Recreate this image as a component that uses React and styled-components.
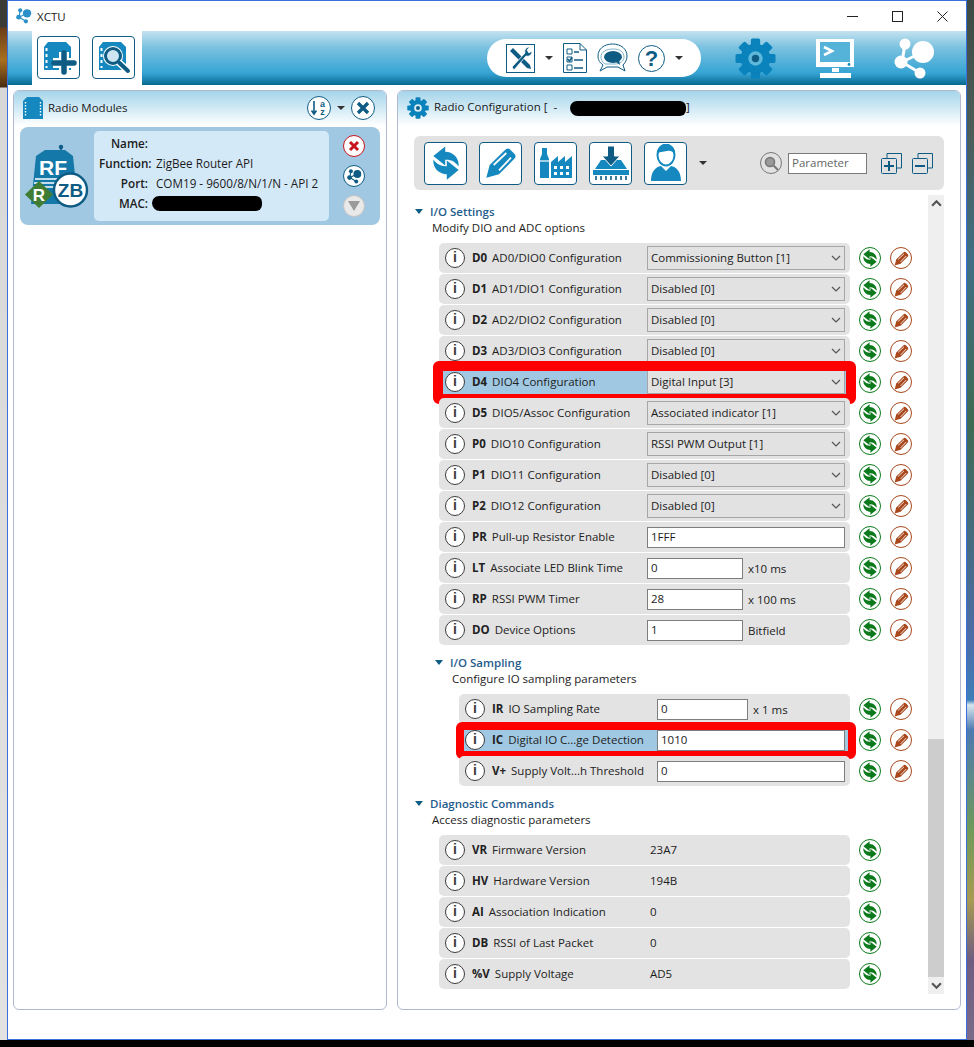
import React from "react"
import styled, { createGlobalStyle } from "styled-components"

const BLUE = "#0e5c84"
const MID = "#1589bf"
const FONT = `"Open Sans", "Noto Sans", sans-serif`

const ioRows = [
  { cmd: "D0", name: "AD0/DIO0 Configuration", select: "Commissioning Button [1]" },
  { cmd: "D1", name: "AD1/DIO1 Configuration", select: "Disabled [0]" },
  { cmd: "D2", name: "AD2/DIO2 Configuration", select: "Disabled [0]" },
  { cmd: "D3", name: "AD3/DIO3 Configuration", select: "Disabled [0]" },
  { cmd: "D4", name: "DIO4 Configuration", select: "Digital Input [3]", mark: "wide" },
  { cmd: "D5", name: "DIO5/Assoc Configuration", select: "Associated indicator [1]" },
  { cmd: "P0", name: "DIO10 Configuration", select: "RSSI PWM Output [1]" },
  { cmd: "P1", name: "DIO11 Configuration", select: "Disabled [0]" },
  { cmd: "P2", name: "DIO12 Configuration", select: "Disabled [0]" },
  { cmd: "PR", name: "Pull-up Resistor Enable", input: "1FFF" },
  { cmd: "LT", name: "Associate LED Blink Time", input: "0", unit: "x10 ms" },
  { cmd: "RP", name: "RSSI PWM Timer", input: "28", unit: "x 100 ms" },
  { cmd: "DO", name: "Device Options", input: "1", unit: "Bitfield" },
]

const samplingRows = [
  { cmd: "IR", name: "IO Sampling Rate", input: "0", unit: "x 1 ms" },
  { cmd: "IC", name: "Digital IO C...ge Detection", input: "1010", mark: "thin" },
  { cmd: "V+", name: "Supply Volt...h Threshold", input: "0" },
]

const diagRows = [
  { cmd: "VR", name: "Firmware Version", value: "23A7" },
  { cmd: "HV", name: "Hardware Version", value: "194B" },
  { cmd: "AI", name: "Association Indication", value: "0" },
  { cmd: "DB", name: "RSSI of Last Packet", value: "0" },
  { cmd: "%V", name: "Supply Voltage", value: "AD5" },
]

function SyncIcon({ color = MID, size = 22 }) {
  const arrow = "M11.5 1.5 L4 7.6 L11.5 13.6 V10 C15 9.8 17.6 11 20 14.2 C20.4 8.6 16.4 5 11.5 4.9 Z"
  return (
    <svg width={size} height={size} viewBox="0 0 24 24">
      <path d={arrow} fill={color} />
      <path d={arrow} fill={color} transform="rotate(180 12 12)" />
    </svg>
  )
}

function PencilIcon({ color = MID, size = 14 }) {
  return (
    <svg width={size} height={size} viewBox="0 0 24 24">
      <path d="M1 23 L3.5 13.5 L15 2.2 A2.8 2.8 0 0 1 19 2 L22 5 A2.8 2.8 0 0 1 21.8 9 L10.5 20.5 Z" fill={color} />
      <path d="M6.5 13.5 L16 4.5 M10.5 17.5 L19.5 8" stroke="#fff" strokeWidth="1.3" />
    </svg>
  )
}

function GearIcon({ size = 40, color = "#0a82bb", hole = "#5db8dc", dot = BLUE }) {
  const teeth = [0, 45, 90, 135, 180, 225, 270, 315]
  return (
    <svg width={size} height={size} viewBox="0 0 40 40">
      {teeth.map((a) => (
        <rect key={a} x="15.5" y="0.5" width="9" height="9" rx="1.5" fill={color} transform={`rotate(${a} 20 20)`} />
      ))}
      <circle cx="20" cy="20" r="14.5" fill={color} />
      <circle cx="20" cy="20" r="7" fill={hole} />
      <circle cx="20" cy="20" r="3.6" fill={dot} />
    </svg>
  )
}

function ModuleIcon({ add, search }) {
  return (
    <svg width="37" height="37" viewBox="0 0 37 37">
      <path d="M8 3 L26 3 L31 8 V31 H4 V8 Z" fill={MID} />
      <path d="M6.5 9V12M6.5 15V18M6.5 21V24M6.5 27V29" stroke="#fff" strokeWidth="2" />
      {add && (
        <>
          <path d="M24 13 V34 M13 24 H35" stroke="#fff" strokeWidth="10" />
          <path d="M24 14 V33 M14 24 H34" stroke={BLUE} strokeWidth="5.5" strokeLinecap="round" />
        </>
      )}
      {search && (
        <>
          <circle cx="18" cy="17" r="10" fill="#fff" />
          <circle cx="18" cy="17" r="7.5" fill="#cfe6f2" stroke={BLUE} strokeWidth="3" />
          <path d="M23.5 23 L33 32" stroke="#fff" strokeWidth="7" />
          <path d="M24 23.5 L33 32" stroke={BLUE} strokeWidth="4" strokeLinecap="round" />
        </>
      )}
    </svg>
  )
}

function FactoryIcon() {
  return (
    <svg width="36" height="36" viewBox="0 0 36 36">
      <path d="M2 33 V14 L4 9 V3 H9 V9 L11 14 V33 Z" fill={MID} />
      <path d="M13 33 V17 L20 11 V17 L27 11 V17 L34 11 V33 Z" fill={MID} />
      <path d="M16 21h3v3h-3zM22 21h3v3h-3zM28 21h3v3h-3zM16 27h3v3h-3zM22 27h3v3h-3zM28 27h3v3h-3z" fill="#fff" />
      <path d="M2 16 H11" stroke="#fff" strokeWidth="1.2" />
    </svg>
  )
}

function LoadIcon() {
  return (
    <svg width="38" height="36" viewBox="0 0 38 36">
      <path d="M3 24 L9 15 H29 L35 24 Z" fill={MID} />
      <path d="M1 25 H37 V30 H1 Z" fill={MID} />
      <path d="M4 31V35M9 31V35M14 31V35M19 31V35M24 31V35M29 31V35M34 31V35" stroke={BLUE} strokeWidth="1.6" />
      <path d="M15.5 1 H22.5 V11 H28 L19 21 L10 11 H15.5 Z" fill={BLUE} stroke="#fff" strokeWidth="1" />
    </svg>
  )
}

function ProfileIcon() {
  return (
    <svg width="32" height="38" viewBox="0 0 32 38">
      <path d="M1 37 C1 27 6 23 11 22 L16 27 L21 22 C26 23 31 27 31 37 Z" fill={MID} />
      <ellipse cx="16" cy="11" rx="8.5" ry="10.5" fill="#fff" stroke={MID} strokeWidth="2" />
      <path d="M7 11 C7 2 11 1 16 1 C22 1 25 3 25 11 C23 7 20 6 17 7 C13 8 9 7 7 11 Z" fill={MID} />
    </svg>
  )
}

function ToolsIcon() {
  return (
    <svg width="29" height="29" viewBox="0 0 29 29">
      <rect x="0.5" y="0.5" width="28" height="28" fill="#fff" stroke={BLUE} />
      <path d="M4 7 L7 4 L24 21 L25 25 L21 24 Z" fill={BLUE} />
      <path d="M6 23 L19 9 C18 6 20 3 24 3 L21 6 L23 9 L26 7 C26 11 23 13 20 12 L8 26 Z" fill={BLUE} stroke="#fff" strokeWidth="0.8" />
    </svg>
  )
}

function ChecklistIcon() {
  return (
    <svg width="24" height="30" viewBox="0 0 24 30">
      <path d="M0.5 0.5 H17 L23.5 7 V29.5 H0.5 Z M17 0.5 V7 H23.5" fill="#fff" stroke={BLUE} />
      <path d="M4 6h5v5H4zM4 14h5v5H4zM4 22h5v5H4z" fill="none" stroke={BLUE} />
      <path d="M11 9h5M11 17h9M11 25h9" stroke={BLUE} strokeWidth="1.6" />
      <path d="M4.5 16 L6.5 18 L9 14.5" stroke={BLUE} strokeWidth="1.6" fill="none" />
    </svg>
  )
}

function ChatIcon() {
  return (
    <svg width="31" height="30" viewBox="0 0 31 30">
      <path d="M6 22 C2 19 1 16 1 13 C1 6 7 1 15.5 1 C24 1 30 6 30 13 C30 16 29 19 26 22 L28 28 L21 24 H10 L3 28 Z" fill="#fff" stroke={BLUE} />
      <path d="M8 21 C5 19 4 16 4 14 C4 9 9 6 16 6 C23 6 27 9 27 14 C27 18 23 21 18 21 L13 21 Z" fill="none" stroke="#7db2cb" />
      <ellipse cx="16" cy="14" rx="9" ry="6" fill={BLUE} />
      <path d="M18 18 L23 22 L22 17 Z" fill={BLUE} />
    </svg>
  )
}

function MonitorIcon() {
  return (
    <svg width="40" height="40" viewBox="0 0 40 40">
      <path d="M1 1 H39 V29 H1 Z" fill="#fff" />
      <path d="M5 4 H35 V24 H5 Z" fill="#55b2d9" />
      <path d="M9 9 L17 13 L9 17" fill="none" stroke="#fff" strokeWidth="2.6" />
      <path d="M17 30 H24 V34 H17 Z M5 35 H36 V40 H5 Z" fill="#fff" />
      <circle cx="34" cy="26.5" r="1.4" fill={MID} />
    </svg>
  )
}

function NetworkIcon({ size = 42, color = "#fff" }) {
  return (
    <svg width={size} height={size} viewBox="0 0 42 42">
      <path d="M8 24 L11 6 M8 24 L29 14 M8 24 L26 35" stroke={color} strokeWidth="3" />
      <circle cx="11" cy="6" r="5.5" fill={color} />
      <circle cx="29" cy="14" r="11" fill={color} />
      <circle cx="7" cy="24" r="6.5" fill={color} />
      <circle cx="26" cy="35" r="5.5" fill={color} />
    </svg>
  )
}

function RadioBadge() {
  return (
    <svg width="66" height="66" viewBox="0 0 66 66">
      <path d="M38 3 V10" stroke={BLUE} strokeWidth="1.6" />
      <circle cx="38" cy="3" r="2.2" fill={BLUE} />
      <path d="M13 12 L22 6 H42 L50 12 L55 60 H8 Z" fill="#1478a8" />
      <text x="30" y="31" textAnchor="middle" fontFamily="Liberation Sans" fontWeight="700" fontSize="21" fill="#fff">RF</text>
      <path d="M12 35H52M11 39H53M10 43H54" stroke="#fff" strokeWidth="1.4" />
      <path d="M16 37 L30 50.5 L16 64 L2 50.5 Z" fill="#3f7d34" />
      <text x="16" y="57" textAnchor="middle" fontFamily="Liberation Sans" fontWeight="700" fontSize="17" fill="#fff">R</text>
      <circle cx="47.5" cy="46" r="16.5" fill="#fff" stroke={BLUE} strokeWidth="2.4" />
      <text x="47.5" y="53" textAnchor="middle" fontFamily="Liberation Sans" fontWeight="700" fontSize="19" fill={BLUE}>ZB</text>
    </svg>
  )
}

function Chevron({ up, size = 10, color = "#555", wide = 1.2 }) {
  return (
    <svg width={size} height={size} viewBox="0 0 10 10">
      <path d={up ? "M1 7 L5 3 L9 7" : "M1 3 L5 7 L9 3"} fill="none" stroke={color} strokeWidth={wide} />
    </svg>
  )
}

function ParamRow({ row, inset }) {
  return (
    <Line $inset={inset}>
      <Row $mark={row.mark} $nested={inset === 45}>
        <InfoDot>i</InfoDot>
        <RowLabel>
          <b>{row.cmd}</b>
          {row.name}
        </RowLabel>
        {row.select && (
          <SelectBox>
            {row.select}
            <Chevron />
          </SelectBox>
        )}
        {row.input && (
          <InputWrap>
            <TextBox $short={!!row.unit} $narrow={inset === 45}>{row.input}</TextBox>
            {row.unit && <Unit>{row.unit}</Unit>}
          </InputWrap>
        )}
        {row.value && <ValueText>{row.value}</ValueText>}
      </Row>
      <RoundAction $color="#0c7a1c">
        <SyncIcon color="#0c7a1c" size={20} />
      </RoundAction>
      {!row.value && (
        <RoundAction $color="#a8481c">
          <PencilIcon color="#a8481c" size={15} />
        </RoundAction>
      )}
    </Line>
  )
}

export default function App() {
  return (
    <>
      <GlobalStyle />
      <Desktop>
        <Top>
          <LeftStrip />
          <AppWindow>
            <TitleBar>
              <TitleLogo>
                <NetworkIcon size={16} color="#2b8fc8" />
              </TitleLogo>
              <TitleText>XCTU</TitleText>
              <WinControls>
                <svg width="11" height="11" viewBox="0 0 11 11"><path d="M0 5.5H11" stroke="#222" /></svg>
                <svg width="11" height="11" viewBox="0 0 11 11"><rect x="0.5" y="0.5" width="10" height="10" fill="none" stroke="#222" /></svg>
                <svg width="11" height="11" viewBox="0 0 11 11"><path d="M0.5 0.5L10.5 10.5M10.5 0.5L0.5 10.5" stroke="#222" /></svg>
              </WinControls>
            </TitleBar>

            <MainBar>
              <WhiteTab>
                <SquareBtn><ModuleIcon add /></SquareBtn>
                <SquareBtn><ModuleIcon search /></SquareBtn>
              </WhiteTab>
              <ToolPill>
                <ToolsIcon />
                <Caret />
                <ChecklistIcon />
                <ChatIcon />
                <HelpCircle>?</HelpCircle>
                <Caret />
              </ToolPill>
              <ModeIcons>
                <GearIcon size={41} />
                <MonitorIcon />
                <NetworkIcon />
              </ModeIcons>
            </MainBar>

            <Body>
              <ModulesPanel>
                <PanelHead>
                  <svg width="20" height="22" viewBox="0 0 20 22">
                    <path d="M4 0H16L20 4V22H0V4Z" fill={MID} />
                    <path d="M2.5 5v14M17.5 5v14" stroke="#fff" strokeWidth="1.4" strokeDasharray="1.5 1.5" />
                  </svg>
                  <PanelTitle>Radio Modules</PanelTitle>
                  <HeadTools>
                    <SortCircle>
                      <svg width="18" height="18" viewBox="0 0 18 18">
                        <path d="M4 2V14M1.5 11.5L4 15L6.5 11.5" fill="none" stroke={BLUE} strokeWidth="1.6" />
                        <text x="12.5" y="8" textAnchor="middle" fontFamily="Liberation Sans" fontWeight="700" fontSize="9" fill={BLUE}>a</text>
                        <text x="12.5" y="16" textAnchor="middle" fontFamily="Liberation Sans" fontWeight="700" fontSize="9" fill={BLUE}>z</text>
                      </svg>
                    </SortCircle>
                    <Caret />
                    <SortCircle>
                      <svg width="14" height="14" viewBox="0 0 14 14">
                        <path d="M2 2L12 12M12 2L2 12" stroke={BLUE} strokeWidth="3.4" />
                      </svg>
                    </SortCircle>
                  </HeadTools>
                </PanelHead>

                <DeviceCard>
                  <BadgeSlot><RadioBadge /></BadgeSlot>
                  <DeviceInfo>
                    <InfoKey>Name:</InfoKey>
                    <span />
                    <InfoKey>Function:</InfoKey>
                    <span>ZigBee Router API</span>
                    <InfoKey>Port:</InfoKey>
                    <span>COM19 - 9600/8/N/1/N - API 2</span>
                    <InfoKey>MAC:</InfoKey>
                    <Scribble $w={110} $shift={-4} />
                  </DeviceInfo>
                  <DeviceActions>
                    <CardAction $border="#c8141c">
                      <svg width="12" height="12" viewBox="0 0 12 12"><path d="M2 2L10 10M10 2L2 10" stroke="#c8141c" strokeWidth="3" /></svg>
                    </CardAction>
                    <CardAction $border={BLUE}>
                      <NetworkIcon size={15} color={BLUE} />
                    </CardAction>
                    <CardAction $border="#c4c4c4" $bg="#e9e9e9">
                      <svg width="12" height="10" viewBox="0 0 12 10"><path d="M0 0H12L6 10Z" fill="#9a9a9a" /></svg>
                    </CardAction>
                  </DeviceActions>
                </DeviceCard>
              </ModulesPanel>

              <ConfigPanel>
                <PanelHead>
                  <GearIcon size={22} hole="#d8eef7" />
                  <PanelTitle>
                    Radio Configuration [ &nbsp;- <Scribble $w={116} $shift={10} />]
                  </PanelTitle>
                </PanelHead>

                <ConfigBar>
                  <SquareBtn><SyncIcon size={38} /></SquareBtn>
                  <SquareBtn><PencilIcon size={32} /></SquareBtn>
                  <SquareBtn><FactoryIcon /></SquareBtn>
                  <SquareBtn><LoadIcon /></SquareBtn>
                  <SquareBtn><ProfileIcon /></SquareBtn>
                  <Caret />
                  <SearchGroup>
                    <SearchCircle>
                      <svg width="15" height="15" viewBox="0 0 15 15">
                        <circle cx="6" cy="6" r="4.5" fill="#9a9a9a" stroke="#777" strokeWidth="1.6" />
                        <path d="M9.5 9.5L14 14" stroke="#777" strokeWidth="2" />
                      </svg>
                    </SearchCircle>
                    <SearchBox>Parameter</SearchBox>
                    <StackBtn>
                      <svg width="21" height="21" viewBox="0 0 21 21">
                        <path d="M6 5V0.5H20.5V15H16" fill="none" stroke={BLUE} />
                        <rect x="0.5" y="5.5" width="15" height="15" rx="1" fill="none" stroke={BLUE} />
                        <path d="M3 13H13M8 8V18" stroke={BLUE} strokeWidth="2" />
                      </svg>
                    </StackBtn>
                    <StackBtn>
                      <svg width="21" height="21" viewBox="0 0 21 21">
                        <path d="M6 5V0.5H20.5V15H16" fill="none" stroke={BLUE} />
                        <rect x="0.5" y="5.5" width="15" height="15" rx="1" fill="none" stroke={BLUE} />
                        <path d="M3 13H13" stroke={BLUE} strokeWidth="2" />
                      </svg>
                    </StackBtn>
                  </SearchGroup>
                </ConfigBar>

                <ScrollRegion>
                  <ScrollContent>
                    <SectionHead>
                      <Arrow />
                      I/O Settings
                    </SectionHead>
                    <SectionNote>Modify DIO and ADC options</SectionNote>
                    <RowList>
                      {ioRows.map((r) => <ParamRow key={r.cmd} row={r} inset={25} />)}
                    </RowList>

                    <SectionHead $nested>
                      <Arrow />
                      I/O Sampling
                    </SectionHead>
                    <SectionNote $nested>Configure IO sampling parameters</SectionNote>
                    <RowList>
                      {samplingRows.map((r) => <ParamRow key={r.cmd} row={r} inset={45} />)}
                    </RowList>

                    <SectionHead>
                      <Arrow />
                      Diagnostic Commands
                    </SectionHead>
                    <SectionNote>Access diagnostic parameters</SectionNote>
                    <RowList>
                      {diagRows.map((r) => <ParamRow key={r.cmd} row={r} inset={25} />)}
                    </RowList>
                  </ScrollContent>
                  <ScrollTrack>
                    <ScrollEnd><Chevron up size={11} wide={2} /></ScrollEnd>
                    <ScrollGutter>
                      <ScrollThumb />
                    </ScrollGutter>
                    <ScrollEnd><Chevron size={11} wide={2} /></ScrollEnd>
                  </ScrollTrack>
                </ScrollRegion>
              </ConfigPanel>
            </Body>
          </AppWindow>
          <RightStrip />
        </Top>
      </Desktop>
    </>
  )
}

const GlobalStyle = createGlobalStyle`
body {
    margin: 0;
    background: #000;
    font-family: ${FONT};
    font-size: 11.5px;
    color: #1c1c1c;
}
`

const Desktop = styled.div`
width: 974px;
height: 1047px;
background: #000;
overflow: hidden;
`

const Top = styled.div`
display: flex;
height: 1040px;
`

const LeftStrip = styled.div`
width: 7px;
background: linear-gradient(180deg, #3a3a36 0, #3a3a36 27px, #6b3d18 28px, #a8701e 60px, #4a2c12 87px, #d8d8d8 88px, #e2e2e2 100%);
`

const RightStrip = styled.div`
width: 7px;
background: linear-gradient(180deg, #3d4a44 0, #4c5d58 130px, #3f6f86 260px, #3e6b52 420px, #4c6da8 640px, #3e7fb8 700px, #d9e6ee 705px, #4d7ab0 730px, #6f9a5a 830px, #a79a52 900px, #6e5d80 960px, #7b6b8a 1040px);
`

const AppWindow = styled.div`
width: 960px;
box-sizing: border-box;
border: 1px solid #3b6fdc;
background: #fff;
display: flex;
flex-direction: column;
`

const TitleBar = styled.div`
height: 30px;
display: flex;
align-items: center;
padding-left: 8px;
`

const TitleLogo = styled.div`
display: flex;
width: 21px;
`

const TitleText = styled.span`
font-size: 11.5px;
color: #222;
`

const WinControls = styled.div`
margin-left: auto;
width: 101px;
margin-right: 18px;
display: flex;
justify-content: space-between;
svg { display: block; }
`

const MainBar = styled.div`
height: 54px;
display: flex;
background: linear-gradient(180deg, #c4e2ef 0%, #7cc2e0 30%, #35a4d4 78%, #2a94c2 84%, #06688f 100%);
`

const WhiteTab = styled.div`
margin-left: 24px;
width: 110px;
box-sizing: border-box;
background: #fff;
display: flex;
gap: 12px;
padding: 5px 5px;
`

const SquareBtn = styled.div`
width: 43px;
height: 43px;
flex: none;
box-sizing: border-box;
border: 1px solid ${BLUE};
border-radius: 4px;
background: #fff;
display: flex;
align-items: center;
justify-content: center;
`

const ToolPill = styled.div`
margin: 8px 0 0 345px;
width: 214px;
height: 38px;
box-sizing: border-box;
background: #fff;
border-radius: 19px;
display: flex;
align-items: center;
padding-left: 19px;
gap: 10px;
`

const Caret = styled.i`
width: 0;
height: 0;
flex: none;
border-left: 4px solid transparent;
border-right: 4px solid transparent;
border-top: 4px solid #333;
`

const HelpCircle = styled.div`
width: 27px;
height: 27px;
box-sizing: border-box;
border: 1px solid ${BLUE};
border-radius: 50%;
color: ${BLUE};
font: 700 22px/25px "Liberation Sans", sans-serif;
text-align: center;
`

const ModeIcons = styled.div`
margin: 7px 0 0 34px;
display: flex;
gap: 39px;
`

const Body = styled.div`
flex: 1;
display: flex;
gap: 10px;
padding: 5px 0 29px 5px;
min-height: 0;
`

const Panel = styled.div`
box-sizing: border-box;
border: 1px solid #b2b8d0;
border-radius: 6px;
background: #fff;
display: flex;
flex-direction: column;
min-height: 0;
`

const ModulesPanel = styled(Panel)`
width: 374px;
`

const ConfigPanel = styled(Panel)`
width: 564px;
`

const PanelHead = styled.div`
height: 35px;
flex: none;
box-sizing: border-box;
display: flex;
align-items: center;
gap: 5px;
padding: 0 9px 2px;
border-radius: 5px 5px 0 0;
background: linear-gradient(180deg, #a6d5ea 0%, #d6ecf6 55%, #fff 100%);
`

const PanelTitle = styled.span`
font-size: 11.5px;
color: #1a1a1a;
white-space: nowrap;
`

const HeadTools = styled.div`
margin-left: auto;
margin-right: 2px;
display: flex;
align-items: center;
gap: 6px;
`

const SortCircle = styled.div`
width: 24px;
height: 24px;
box-sizing: border-box;
border: 1.5px solid ${BLUE};
border-radius: 50%;
background: #fff;
display: flex;
align-items: center;
justify-content: center;
`

const DeviceCard = styled.div`
margin: 1px 6px 0;
height: 98px;
box-sizing: border-box;
border-radius: 8px;
background: #a0c8e2;
display: flex;
align-items: center;
padding: 4px 0 4px 3px;
`

const BadgeSlot = styled.div`
width: 71px;
flex: none;
svg { display: block; margin-top: 2px; }
`

const DeviceInfo = styled.div`
width: 235px;
height: 90px;
box-sizing: border-box;
border-radius: 5px;
background: #d4e9f8;
padding: 2px 0 0 5px;
display: grid;
grid-template-columns: 49px 1fr;
grid-auto-rows: 20px;
column-gap: 8px;
align-items: center;
font-size: 11.7px;
`

const InfoKey = styled.span`
text-align: right;
font-weight: 600;
white-space: nowrap;
`

const Scribble = styled.span`
display: inline-block;
vertical-align: middle;
width: ${(p) => p.$w}px;
height: 15px;
margin-left: ${(p) => p.$shift}px;
background: #000;
border-radius: 8px 7px 7px 9px;
`

const DeviceActions = styled.div`
margin-left: 14px;
display: flex;
flex-direction: column;
gap: 8px;
`

const CardAction = styled.div`
width: 22px;
height: 22px;
box-sizing: border-box;
border: 1.5px solid ${(p) => p.$border};
border-radius: 50%;
background: ${(p) => p.$bg || "#fff"};
display: flex;
align-items: center;
justify-content: center;
`

const ConfigBar = styled.div`
margin: 10px 16px 0 16px;
height: 54px;
flex: none;
box-sizing: border-box;
background: #e2e2e2;
border-radius: 6px;
display: flex;
align-items: center;
padding-left: 10px;
gap: 12px;
`

const SearchGroup = styled.div`
margin-left: auto;
display: flex;
align-items: center;
padding-right: 11px;
`

const SearchCircle = styled.div`
width: 22px;
height: 22px;
box-sizing: border-box;
border: 1px solid #777;
border-radius: 50%;
display: flex;
align-items: center;
justify-content: center;
margin-right: 6px;
`

const SearchBox = styled.div`
width: 79px;
height: 21px;
box-sizing: border-box;
border: 1px solid #7a7a7a;
background: #fff;
color: #666;
font-size: 11.5px;
line-height: 17px;
padding-left: 3px;
margin-right: 14px;
`

const StackBtn = styled.div`
display: flex;
margin-right: 10px;
&:last-child { margin-right: 0; }
`

const ScrollRegion = styled.div`
margin: 5px 16px 0 16px;
flex: none;
display: flex;
height: 799px;
`

const ScrollContent = styled.div`
flex: 1;
padding-top: 9px;
`

const SectionHead = styled.div`
height: 16px;
line-height: 16px;
position: relative;
margin-left: ${(p) => (p.$nested ? 36 : 16)}px;
color: #1f5c8c;
font-weight: 600;
font-size: 11.5px;
`

const Arrow = styled.i`
position: absolute;
left: -15px;
top: 5px;
border-left: 4px solid transparent;
border-right: 4px solid transparent;
border-top: 5px solid ${BLUE};
`

const SectionNote = styled.div`
height: 16px;
line-height: 16px;
margin-left: ${(p) => (p.$nested ? 38 : 18)}px;
font-size: 11.5px;
color: #1c1c1c;
`

const RowList = styled.div`
display: flex;
flex-direction: column;
gap: 1px;
margin: 7px 0 10px;
`

const Line = styled.div`
display: flex;
align-items: center;
gap: 9px;
padding: 0 16px 0 ${(p) => p.$inset}px;
`

const Row = styled.div`
position: relative;
width: ${(p) => (p.$nested ? 391 : 411)}px;
height: 30px;
flex: none;
box-sizing: border-box;
border-radius: 5px;
background: ${(p) => (p.$mark ? "#a0c8e2" : "#e3e3e3")};
display: grid;
grid-template-columns: 20px ${(p) => (p.$nested ? 158 : 168)}px 1fr;
column-gap: 7px;
align-items: center;
padding: 0 5px 0 6px;
${(p) => p.$mark && `
  &::after {
    content: "";
    position: absolute;
    inset: ${p.$mark === "wide" ? "-6px -6px -7px -6px" : "-3px -6px -4px -3px"};
    border: ${p.$mark === "wide" ? 10 : 8}px solid #f00;
    border-radius: 6px;
    pointer-events: none;
  }
`}
`

const InfoDot = styled.div`
width: 20px;
height: 20px;
box-sizing: border-box;
border: 1.6px solid #3c3c3c;
border-radius: 50%;
background: #fff;
color: #3c3c3c;
font: 700 14px/17px "Liberation Sans", sans-serif;
text-align: center;
`

const RowLabel = styled.div`
font-size: 11.5px;
white-space: nowrap;
color: #222;
padding-bottom: 2px;
b {
    font-weight: 700;
    margin-right: 5px;
}
`

const SelectBox = styled.div`
height: 24px;
box-sizing: border-box;
border: 1px solid #a6a6a6;
background: #e2e2e2;
display: flex;
align-items: center;
justify-content: space-between;
padding: 0 3px 1px 3px;
font-size: 11.5px;
white-space: nowrap;
`

const InputWrap = styled.div`
display: flex;
align-items: center;
gap: 5px;
`

const TextBox = styled.div`
flex: ${(p) => (p.$short ? "none" : "1")};
width: ${(p) => (p.$short ? (p.$narrow ? "91px" : "96px") : "auto")};
height: 21px;
box-sizing: border-box;
border: 1px solid #7d7d7d;
background: #fff;
line-height: 18px;
padding-left: 3px;
font-size: 11.5px;
`

const Unit = styled.span`
font-size: 11.5px;
white-space: nowrap;
`

const ValueText = styled.span`
font-size: 11.5px;
padding-left: 3px;
padding-bottom: 1px;
`

const RoundAction = styled.div`
width: 22px;
height: 22px;
flex: none;
box-sizing: border-box;
border: 1px solid ${(p) => p.$color};
border-radius: 50%;
background: #fff;
display: flex;
align-items: center;
justify-content: center;
`

const ScrollTrack = styled.div`
width: 16px;
flex: none;
background: #efefef;
display: flex;
flex-direction: column;
`

const ScrollEnd = styled.div`
height: 17px;
flex: none;
display: flex;
align-items: center;
justify-content: center;
`

const ScrollGutter = styled.div`
flex: 1;
display: flex;
flex-direction: column;
justify-content: flex-end;
`

const ScrollThumb = styled.div`
height: 238px;
background: #cdcdcd;
`
